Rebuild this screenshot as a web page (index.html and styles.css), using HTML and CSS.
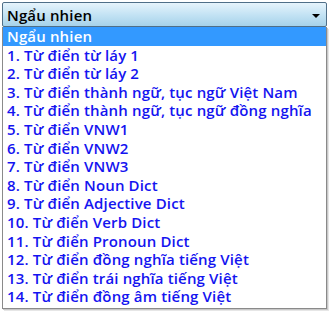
FILE: index.html
```html
<!DOCTYPE html>
<html lang="vi">
<head>
	<meta charset="UTF-8">
	<title>Từ điển</title>
	<link rel="stylesheet" href="styles.css">
</head>
<body>
	<div class="combo">
		<div class="combo_head">
			<span>Ngẩu nhien</span>
			<span class="arrow"></span>
		</div>
		<ul class="combo_list">
			<li class="selected">Ngẩu nhien</li>
			<li>1. Từ điển từ láy 1</li>
			<li>2. Từ điển từ láy 2</li>
			<li>3. Từ điển thành ngữ, tục ngữ Việt Nam</li>
			<li>4. Từ điển thành ngữ, tục ngữ đồng nghĩa</li>
			<li>5. Từ điển VNW1</li>
			<li>6. Từ điển VNW2</li>
			<li>7. Từ điển VNW3</li>
			<li>8. Từ điển Noun Dict</li>
			<li>9. Từ điển Adjective Dict</li>
			<li>10. Từ điển Verb Dict</li>
			<li>11. Từ điển Pronoun Dict</li>
			<li>12. Từ điển đồng nghĩa tiếng Việt</li>
			<li>13. Từ điển trái nghĩa tiếng Việt</li>
			<li>14. Từ điển đồng âm tiếng Việt</li>
		</ul>
	</div>
</body>
</html>
```

FILE: styles.css
```css
* {
	margin: 0;
	padding: 0;
	box-sizing: border-box;
}
html, body {
	width: 100%;
	height: 100%;
	background: #fff;
	font-family: "Open Sans", "DejaVu Sans", sans-serif;
	font-size: 15px;
	font-weight: 600;
	letter-spacing: 0.15px;
}
body {
	padding: 2px 3px 4px 2px;
}
.combo {
	display: flex;
	flex-direction: column;
	width: 325px;
}
.combo_head {
	height: 25px;
	display: flex;
	align-items: center;
	justify-content: space-between;
	padding: 0 6px 0 4px;
	border: 1px solid #4f6f88;
	border-radius: 2px;
	background: linear-gradient(#e6f4fc, #c4e3f4 50%, #a6d2ea);
	color: #000;
}
.arrow {
	width: 0;
	height: 0;
	border-left: 4px solid transparent;
	border-right: 4px solid transparent;
	border-top: 4px solid #000;
	margin-top: 2px;
}
.combo_list {
	list-style: none;
	border: 1px solid #8a8a8a;
	border-top: 0;
	box-shadow: 1px 1px 0 #c8c8c8, 2px 2px 0 #e6e6e6;
	padding-bottom: 2px;
	height: 282px;
}
.combo_list li {
	height: 18.6px;
	line-height: 18.6px;
	padding-left: 4px;
	color: #1414f0;
	white-space: nowrap;
}
.combo_list li.selected {
	background: #3399ff;
	color: #fff;
}
```
